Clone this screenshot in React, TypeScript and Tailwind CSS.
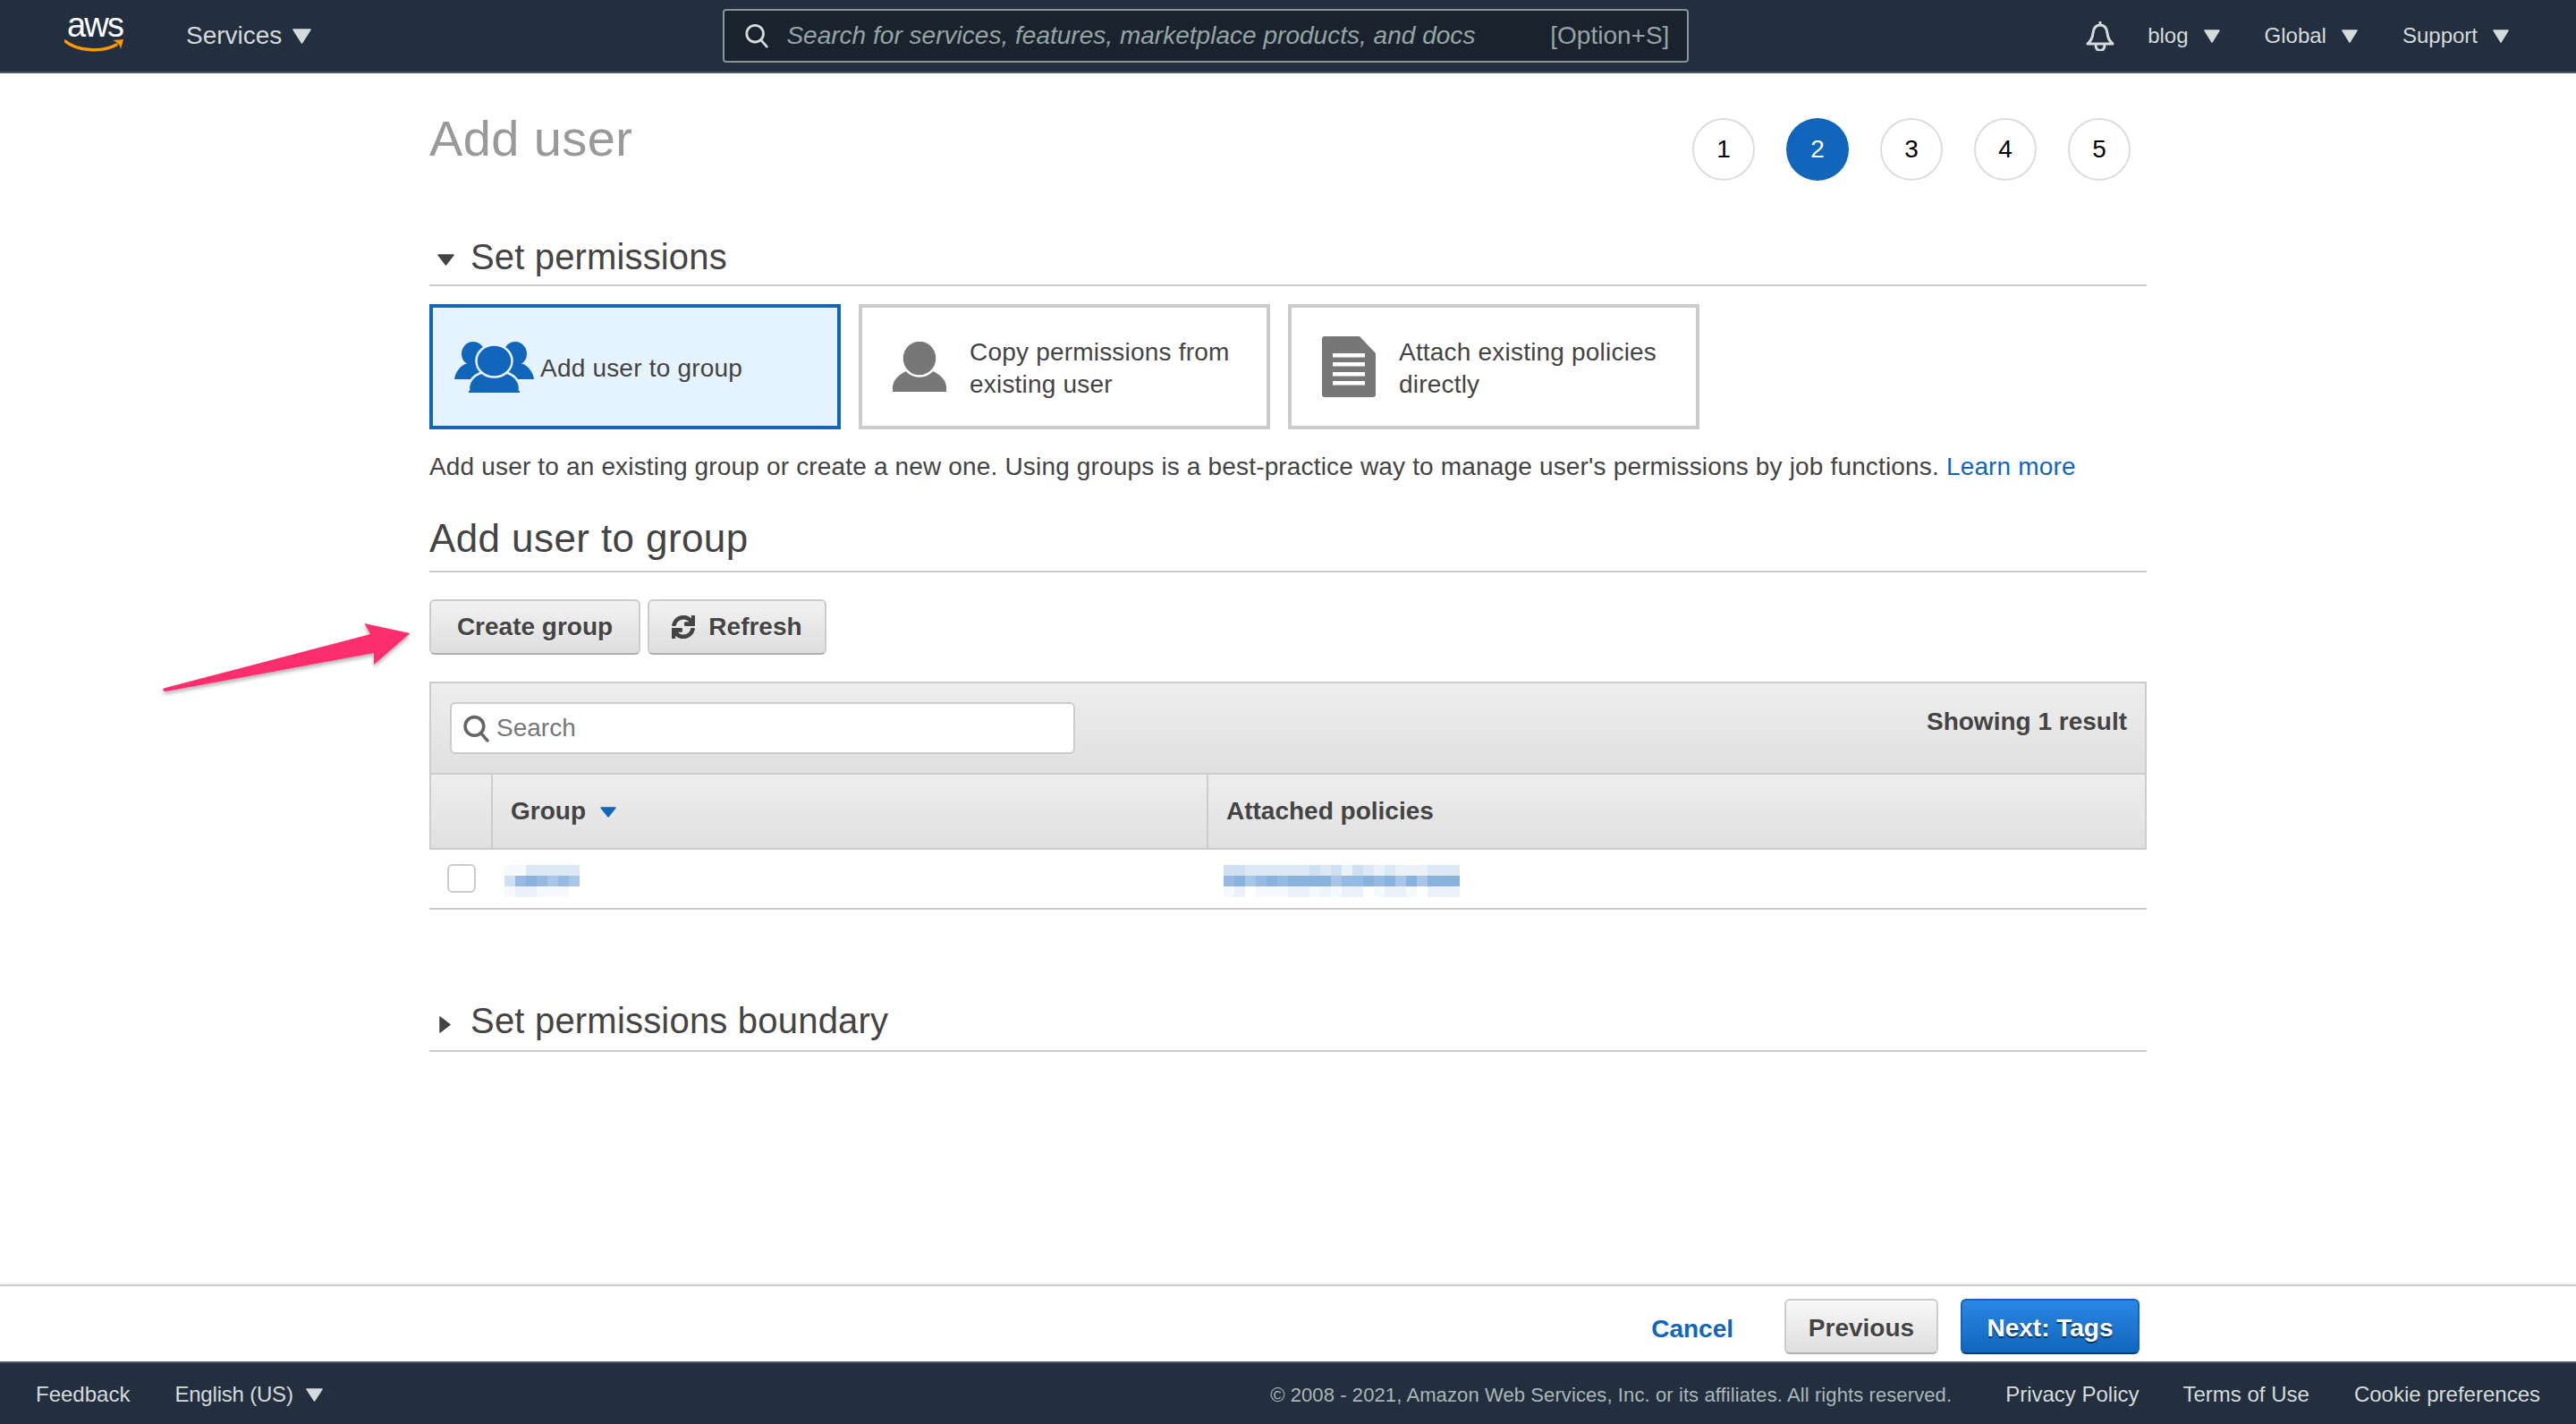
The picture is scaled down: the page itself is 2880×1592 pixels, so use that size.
import React from "react";
import { FaSync } from "react-icons/fa";

function Tri({ w, h, color, dir = "down", className = "" }: { w: number; h: number; color: string; dir?: "down" | "right"; className?: string }) {
  const pts = dir === "down" ? `1,1 ${w - 1},1 ${w / 2},${h - 1}` : `1,1 ${w - 1},${h / 2} 1,${h - 1}`;
  return (
    <svg width={w} height={h} viewBox={`0 0 ${w} ${h}`} className={`shrink-0 ${className}`}>
      <polygon points={pts} fill={color} stroke={color} strokeWidth="1.5" strokeLinejoin="round" />
    </svg>
  );
}

function NavItem({ label, tri = "ml-[17px]", className = "" }: { label: string; tri?: string; className?: string }) {
  return (
    <div className={`flex items-center ${className}`}>
      <span className="text-[24px] leading-[32px] text-[#d5dbdb]">{label}</span>
      <Tri w={18} h={15} color="#d5dbdb" className={tri} />
    </div>
  );
}

function SearchGlyph({ size, color, sw }: { size: number; color: string; sw: number }) {
  return (
    <svg width={size} height={size} viewBox="0 0 30 30" fill="none" className="shrink-0">
      <circle cx="13" cy="12.5" r="10" stroke={color} strokeWidth={sw} />
      <line x1="20" y1="20" x2="27" y2="28" stroke={color} strokeWidth={sw} strokeLinecap="round" />
    </svg>
  );
}

function Header() {
  return (
    <header className="flex h-[82px] shrink-0 items-center border-b-2 border-[#4f5761] bg-[#232f3e]">
      <div className="relative ml-[72px] flex h-[42px] w-[68px] flex-col items-center">
        <span className="text-[38px] leading-[18px] tracking-[-1.8px] text-white">aws</span>
        <svg width="68" height="16" viewBox="0 0 68 16" className="absolute left-0 top-[24px]" fill="none">
          <path d="M1 3 C14 14 42 16 58 7" stroke="#ff9900" strokeWidth="3.5" strokeLinecap="round" />
          <path d="M54 2 L66 1 L63 12 C63 8 59 4 54 2 Z" fill="#ff9900" />
        </svg>
      </div>
      <span className="ml-[68px] text-[28px] leading-[36px] text-[#d5dbdb]">Services</span>
      <Tri w={21} h={17} color="#d5dbdb" className="ml-[12px]" />
      <div className="ml-[460px] flex h-[60px] w-[1080px] items-center rounded-[4px] border-2 border-[#879596] bg-[#1a222d] pl-[22px] pr-[20px]">
        <SearchGlyph size={28} color="#d5dbdb" sw={3} />
        <span className="ml-[19px] text-[28px] italic tracking-[0.02px] text-[#95a5a6]">Search for services, features, marketplace products, and docs</span>
        <span className="ml-auto text-[28px] text-[#95a5a6]">[Option+S]</span>
      </div>
      <div className="ml-auto flex items-center pr-[75px]">
        <svg width="32" height="34" viewBox="0 0 32 34" fill="none" className="shrink-0">
          <path d="M16 5 C10.5 5 8.5 9.5 8 14 C7.5 19.5 5.5 23 2 26 H30 C26.5 23 24.5 19.5 24 14 C23.5 9.5 21.5 5 16 5 Z" stroke="#d5dbdb" strokeWidth="3" strokeLinejoin="round" />
          <path d="M16 1 V5" stroke="#d5dbdb" strokeWidth="3" />
          <path d="M11.5 27 A4.8 4.8 0 1 0 20.5 27" stroke="#d5dbdb" strokeWidth="3" />
        </svg>
        <NavItem label="blog" className="ml-[37px]" />
        <NavItem label="Global" className="ml-[50px]" />
        <NavItem label="Support" className="ml-[50px]" />
      </div>
    </header>
  );
}

function Steps() {
  return (
    <div className="mr-[18px] mt-[9px] flex gap-[35px]">
      {[1, 2, 3, 4, 5].map((n) => (
        <div
          key={n}
          className={
            n === 2
              ? "flex h-[70px] w-[70px] items-center justify-center rounded-full bg-[#1166bb] text-[28px] text-white"
              : "flex h-[70px] w-[70px] items-center justify-center rounded-full border-2 border-[#dddddd] bg-white text-[28px] text-black"
          }
        >
          {n}
        </div>
      ))}
    </div>
  );
}

function GroupIcon() {
  const c = "#1166bb";
  const bg = "#e5f3fe";
  const side = (
    <>
      <ellipse cx="21" cy="13.5" rx="13" ry="13.5" fill={c} />
      <path d="M0 42 C1 34 6 28 12 25 L32 25 C38 30 42 36 42 42 Z" fill={c} />
    </>
  );
  return (
    <svg width="89" height="57" viewBox="0 0 89 57" className="shrink-0">
      {side}
      <g transform="translate(89 0) scale(-1 1)">{side}</g>
      <path d="M16 57 V50 C17 43 22 38 29 35 L60 35 C67 38 72 43 73 50 V57 Z" fill={c} stroke={bg} strokeWidth="2.5" />
      <rect x="16" y="55" width="57" height="2" fill={c} />
      <ellipse cx="44.5" cy="21.5" rx="20" ry="18" fill={c} stroke={bg} strokeWidth="2.5" />
    </svg>
  );
}

function UserIcon() {
  return (
    <svg width="60" height="56" viewBox="0 0 60 56" className="shrink-0">
      <path d="M0 56 V50 C1 42 7 37 15 33 L45 33 C53 37 59 42 60 50 V56 Z" fill="#777777" />
      <ellipse cx="30" cy="18.5" rx="19.5" ry="20" fill="#777777" stroke="#ffffff" strokeWidth="2.5" />
    </svg>
  );
}

function DocIcon() {
  return (
    <svg width="60" height="68" viewBox="0 0 60 68" className="shrink-0">
      <path d="M3 0 H42 L60 19 V65 Q60 68 57 68 H3 Q0 68 0 65 V3 Q0 0 3 0 Z" fill="#777777" />
      <rect x="12" y="19" width="36" height="4.5" fill="#ffffff" />
      <rect x="12" y="29" width="36" height="4.5" fill="#ffffff" />
      <rect x="12" y="40" width="36" height="4.5" fill="#ffffff" />
      <rect x="12" y="50" width="36" height="4.5" fill="#ffffff" />
    </svg>
  );
}

function Cards() {
  return (
    <div className="mt-[20px] flex gap-[20px] text-[28px] leading-[36px] tracking-[0.2px] text-[#444444]">
      <div className="flex h-[140px] w-[460px] items-center border-4 border-[#1166bb] bg-[#e5f3fe] pl-[24px]">
        <GroupIcon />
        <span className="ml-[7px] pt-[3px]">Add user to group</span>
      </div>
      <div className="flex h-[140px] w-[460px] items-center border-4 border-[#cccccc] bg-white pl-[34px]">
        <UserIcon />
        <span className="ml-[26px] pt-[3px]">Copy permissions from<br />existing user</span>
      </div>
      <div className="flex h-[140px] w-[460px] items-center border-4 border-[#cccccc] bg-white pl-[34px]">
        <DocIcon />
        <span className="ml-[26px] pt-[3px]">Attach existing policies<br />directly</span>
      </div>
    </div>
  );
}

const palette = ["transparent", "#f6f9fd", "#eaf1fa", "#dce8f6", "#cfe0f2", "#a9c6e7", "#97bae2", "#8ab2de", "#f0f5fb"];

function Mosaic({ rows }: { rows: string[] }) {
  return (
    <div className="flex flex-col">
      {rows.map((r, i) => (
        <div key={i} className="flex h-[12px]">
          {r.split("").map((d, j) => (
            <div key={j} className="h-[12px] w-[12px]" style={{ backgroundColor: palette[Number(d)] }} />
          ))}
        </div>
      ))}
    </div>
  );
}

function headBtn(extra: string) {
  return `flex h-[62px] items-center justify-center rounded-[6px] border-2 border-[#cccccc] border-b-[#b0b0b0] bg-gradient-to-b from-[#f2f2f2] to-[#dedede] text-[28px] font-bold text-[#444444] [text-shadow:0_1px_0_#ffffff] ${extra}`;
}

function Table() {
  return (
    <div className="mt-[30px]">
      <div className="flex h-[104px] items-start justify-between border-2 border-[#cccccc] bg-gradient-to-b from-[#eeeeee] to-[#e0e0e0] pl-[21px] pr-[20px] pt-[21px]">
        <div className="flex h-[58px] w-[699px] items-center rounded-[6px] border-2 border-[#cccccc] bg-white pl-[12px]">
          <SearchGlyph size={31} color="#666666" sw={3.5} />
          <span className="ml-[7px] text-[28px] text-[#777777]">Search</span>
        </div>
        <span className="mt-[4px] text-[28px] font-bold leading-[36px] text-[#444444]">Showing 1 result</span>
      </div>
      <div className="flex h-[84px] items-stretch border-x-2 border-b-2 border-[#cccccc] bg-gradient-to-b from-[#eeeeee] to-[#e0e0e0] text-[28px] font-bold text-[#444444]">
        <div className="w-[69px] border-r-2 border-[#cccccc]" />
        <div className="flex w-[800px] items-center border-r-2 border-[#cccccc] pl-[20px]">
          <span>Group</span>
          <Tri w={18} h={12} color="#1166bb" className="ml-[16px] mt-[2px]" />
        </div>
        <div className="flex flex-1 items-center pl-[20px]">Attached policies</div>
      </div>
      <div className="flex h-[67px] items-start border-b-2 border-[#cccccc] pt-[16px]">
        <div className="ml-[20px] h-[32px] w-[32px] rounded-[6px] border-2 border-[#cccccc] bg-white" />
        <div className="ml-[32px] w-[804px] pt-[1px]">
          <Mosaic rows={["1133333", "46765650", "1221110"]} />
        </div>
        <div className="pt-[1px]">
          <Mosaic
            rows={[
              "4433333343424323222333",
              "6756767777566767575777",
              "1201112218122012210222",
            ]}
          />
        </div>
      </div>
    </div>
  );
}

function Arrow() {
  return (
    <svg width="300" height="100" viewBox="0 0 300 100" className="absolute left-[170px] top-[685px]">
      <defs>
        <filter id="as" x="-10%" y="-20%" width="120%" height="150%">
          <feDropShadow dx="0" dy="3" stdDeviation="2" floodColor="#000" floodOpacity="0.3" />
        </filter>
      </defs>
      <path d="M13 84.5 L244 24 L237.5 12 L288.5 23 L248 58 L248 45 L15.5 88 Q11 88 13 84.5 Z" fill="#fd2e6e" filter="url(#as)" />
    </svg>
  );
}

export default function App() {
  return (
    <div className="relative flex min-h-screen w-full flex-col bg-white font-['Liberation_Sans',Arial,sans-serif]">
      <Header />
      <main className="mx-auto flex w-[1920px] flex-1 flex-col">
        <div className="flex items-start justify-between pt-[41px]">
          <h1 className="text-[56px] leading-[64px] tracking-[0.4px] text-[#999999]">Add user</h1>
          <Steps />
        </div>
        <div className="mt-[59px] flex h-[59px] items-start border-b-2 border-[#cccccc] text-[40px] leading-[48px] tracking-[0.15px] text-[#444444]">
          <Tri w={19} h={13} color="#444444" className="ml-[9px] mt-[23px]" />
          <span className="ml-[18px] pt-[2px]">Set permissions</span>
        </div>
        <Cards />
        <p className="mt-[24px] text-[28px] leading-[36px] tracking-[0.165px] text-[#444444]">
          Add user to an existing group or create a new one. Using groups is a best-practice way to manage user's permissions by job functions.{" "}
          <span className="text-[#1166bb]">Learn more</span>
        </p>
        <div className="mt-[38px] h-[62px] border-b-2 border-[#cccccc] text-[44px] leading-[48px] tracking-[0.4px] text-[#444444]">Add user to group</div>
        <div className="mt-[30px] flex gap-[8px]">
          <button className={headBtn("w-[236px]")}>Create group</button>
          <button className={headBtn("w-[200px]")}>
            <FaSync className="mr-[15px] text-[26px]" stroke="#444444" strokeWidth={22} />
            Refresh
          </button>
        </div>
        <Table />
        <div className="mt-[100px] flex h-[59px] items-start border-b-2 border-[#cccccc] text-[40px] leading-[48px] tracking-[0.2px] text-[#444444]">
          <Tri w={13} h={19} color="#444444" dir="right" className="ml-[11px] mt-[19px]" />
          <span className="ml-[22px]">Set permissions boundary</span>
        </div>
      </main>
      <div className="flex h-[86px] shrink-0 items-start justify-end border-t-2 border-[#cccccc] bg-white pr-[488px] pt-[14px] shadow-[0_-2px_3px_rgba(0,0,0,0.06)]">
        <span className="mr-[57px] mt-[16px] text-[28px] font-bold leading-[36px] text-[#1166bb]">Cancel</span>
        <button className={headBtn("w-[172px] from-[#f8f8f8] pt-[4px]")}>Previous</button>
        <button className="ml-[25px] flex h-[62px] w-[200px] items-center justify-center rounded-[6px] border-2 border-[#1166bb] border-b-[#003f7f] bg-gradient-to-b from-[#2b88e6] to-[#0f66bb] pt-[4px] text-[28px] font-bold text-white [text-shadow:0_2px_1px_rgba(0,0,0,0.6)]">
          Next: Tags
        </button>
      </div>
      <footer className="flex h-[70px] shrink-0 items-center border-t-2 border-[#4f5761] bg-[#232f3e] pl-[40px] pr-[40px] pt-[2px] text-[24px] text-[#d5dbdb]">
        <span>Feedback</span>
        <span className="ml-[50px] tracking-[-0.2px]">English (US)</span>
        <Tri w={19} h={15} color="#d5dbdb" className="ml-[14px]" />
        <span className="ml-auto text-[22px] tracking-[0.1px] text-[#aab7b8]">© 2008 - 2021, Amazon Web Services, Inc. or its affiliates. All rights reserved.</span>
        <span className="ml-[60px]">Privacy Policy</span>
        <span className="ml-[49px]">Terms of Use</span>
        <span className="ml-[50px]">Cookie preferences</span>
      </footer>
      <Arrow />
    </div>
  );
}
